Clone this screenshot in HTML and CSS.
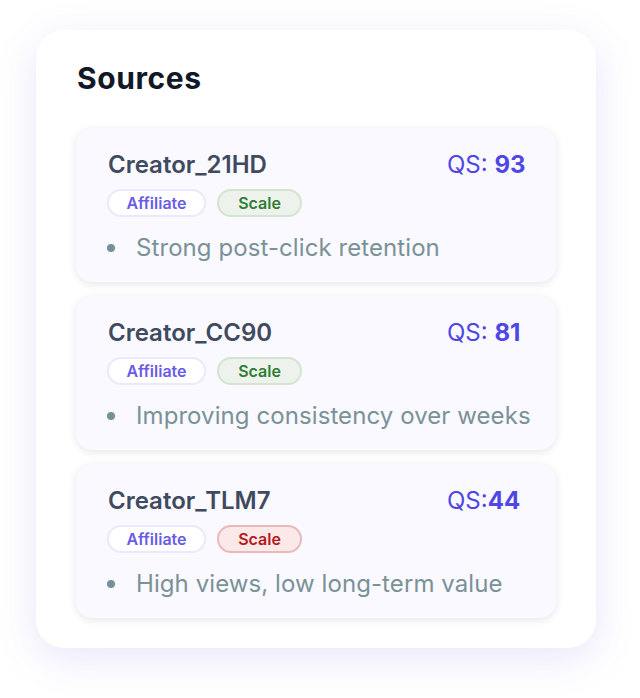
FILE: index.html
```html
<!DOCTYPE html>
<html>
<head>
<meta charset="utf-8">
<link rel="stylesheet" href="styles.css">
</head>
<body>
<div class="panel">
  <h1 class="title">Sources</h1>
  <div class="list">
    <div class="card">
      <div class="head">
        <span class="name">Creator_21HD</span>
        <span class="qs">QS: <b>93</b></span>
      </div>
      <div class="tags">
        <span class="tag tag-aff">Affiliate</span>
        <span class="tag tag-green">Scale</span>
      </div>
      <ul class="notes"><li>Strong post-click retention</li></ul>
    </div>
    <div class="card">
      <div class="head">
        <span class="name">Creator_CC90</span>
        <span class="qs">QS: <b>81</b></span>
      </div>
      <div class="tags">
        <span class="tag tag-aff">Affiliate</span>
        <span class="tag tag-green">Scale</span>
      </div>
      <ul class="notes"><li>Improving consistency over weeks</li></ul>
    </div>
    <div class="card">
      <div class="head">
        <span class="name">Creator_TLM7</span>
        <span class="qs">QS:<b>44</b></span>
      </div>
      <div class="tags">
        <span class="tag tag-aff">Affiliate</span>
        <span class="tag tag-red">Scale</span>
      </div>
      <ul class="notes"><li>High views, low long-term value</li></ul>
    </div>
  </div>
</div>
</body>
</html>
```

FILE: styles.css
```css
html, body {
  margin: 0;
  padding: 0;
  background: #ffffff;
}
body {
  padding: 30px 44px 50px 36px;
  font-family: Inter, "Noto Sans", sans-serif;
}
.panel {
  width: 560px;
  box-sizing: border-box;
  background: #ffffff;
  border-radius: 28px;
  padding: 30px 40px 30px 40px;
  box-shadow: 0 10px 40px rgba(110, 100, 230, 0.16);
}
.title {
  margin: 0 0 32px 1px;
  font-weight: 700;
  font-size: 30px;
  line-height: 36px;
  letter-spacing: 0.6px;
  color: #111827;
}
.list {
  display: flex;
  flex-direction: column;
  gap: 14px;
}
.card {
  background: #f9f9ff;
  border-radius: 16px;
  padding: 22px 31px 0 32px;
  height: 154px;
  box-sizing: border-box;
  box-shadow: 0 2px 8px rgba(0, 0, 0, 0.10);
}
.head {
  display: flex;
  align-items: center;
  height: 28px;
}
.name {
  flex: 1;
  font-size: 24px;
  font-weight: 600;
  color: #3f4a5e;
}
.qs {
  width: 78px;
  white-space: nowrap;
  font-size: 24px;
  color: #4f46e5;
}
.qs b {
  font-weight: 700;
}
.tags {
  display: flex;
  gap: 11px;
  margin-top: 11px;
  margin-left: -1px;
}
.tag {
  height: 28px;
  box-sizing: border-box;
  border-radius: 14px;
  border: 2px solid;
  font-size: 16px;
  font-weight: 600;
  display: flex;
  align-items: center;
  justify-content: center;
}
.tag-aff {
  width: 99px;
  background: #ffffff;
  border-color: #ebe9fc;
  color: #6a5be6;
}
.tag-green {
  width: 85px;
  background: #edf3ec;
  border-color: #d3e4d0;
  color: #2f7d32;
}
.tag-red {
  width: 85px;
  background: #fbe9e9;
  border-color: #e9b9b8;
  color: #b31b1b;
}
.notes {
  list-style: none;
  margin: 15px 0 0 0;
  padding: 0;
  font-size: 24px;
  line-height: 32px;
  letter-spacing: 0.08px;
  color: #7a9198;
}
.notes li {
  display: flex;
  align-items: center;
  gap: 21px;
  white-space: nowrap;
}
.notes li::before {
  content: "";
  width: 8px;
  height: 8px;
  margin-left: -1px;
  border-radius: 50%;
  background: #76909a;
  flex: none;
}
```
